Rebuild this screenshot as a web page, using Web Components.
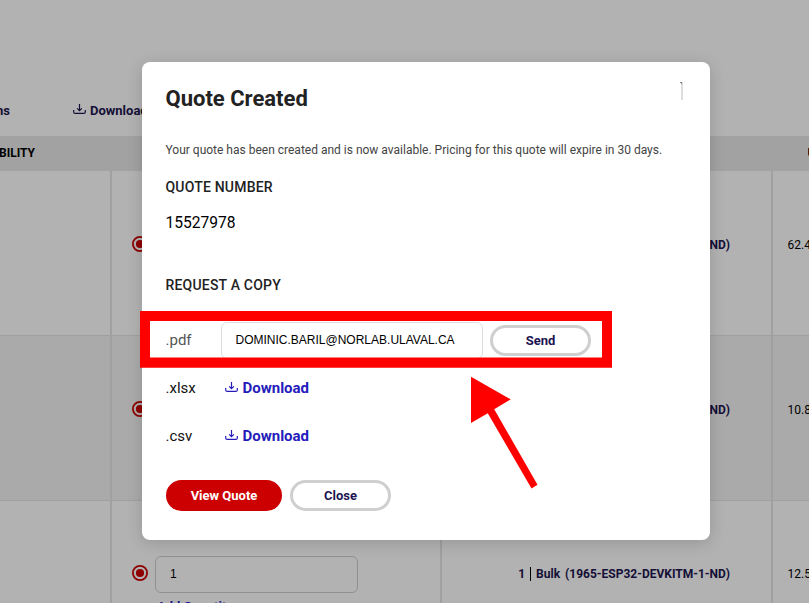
<!DOCTYPE html>
<html lang="en">
<head>
<meta charset="utf-8">
<title>Quote Created</title>
<style>
html,body{margin:0;width:809px;height:603px;overflow:hidden;background:#fff;font-family:Roboto,"Liberation Sans",sans-serif;color:#000}
</style>
</head>
<body>
<quote-page></quote-page>
<script>
const define = (name, html) => customElements.define(name, class extends HTMLElement {
  constructor() {
    super();
    const t = document.createElement('template');
    t.innerHTML = html;
    this.attachShadow({ mode: 'open' }).append(t.content.cloneNode(true));
  }
});

define('download-icon', `
<style>:host{display:block;width:13px;height:11px}svg{display:block}</style>
<svg width="13" height="11" viewBox="0 0 13 11" fill="none" stroke="currentColor" stroke-width="1.2">
<path d="M.7 6v1.9q0 1.5 1.5 1.5h8.6q1.5 0 1.5-1.5V6"/><path d="M6.5 0v6.2M4.1 4.4l2.4 2.3 2.4-2.3"/></svg>`);

define('radio-dot', `
<style>:host{display:block;width:16px;height:16px;flex:none}svg{display:block}</style>
<svg width="16" height="16"><circle cx="8" cy="8" r="7.1" fill="none" stroke="#c00" stroke-width="1.8"/><circle cx="8" cy="8" r="4.1" fill="#c00"/></svg>`);

define('pill-button', `
<style>
:host{display:flex;box-sizing:border-box;width:101px;height:31px;align-items:center;justify-content:center;border:3px solid #cfcfcf;border-radius:16px;background:#fff;color:#1c1450;font-size:13px;font-weight:700;line-height:16px}
:host([primary]){width:116px;border-color:#c00;background:#c00;color:#fff}
:host([low]){padding-top:1px}
</style><slot></slot>`);

define('page-toolbar', `
<style>
:host{display:flex;height:136px;box-sizing:border-box;padding-top:103px;font-size:13px;font-weight:700;line-height:16px;color:#1d164f}
.tail{width:73px;margin-left:-4px;margin-right:4px}
.dl{display:flex;gap:4px}
download-icon{margin-top:1px}
</style>
<span class="tail">ns</span><span class="dl"><download-icon></download-icon><span>Download</span></span>`);

define('table-head', `
<style>
:host{display:flex;justify-content:space-between;align-items:center;height:35px;background:#e9e9e9;font-size:12px;font-weight:700;box-sizing:border-box;padding-bottom:2px}
.l{margin-left:-1px}.r{width:1.5px;overflow:hidden}
</style>
<span class="l">BILITY</span><span class="r">U</span>`);

define('table-row', `
<style>
:host{display:grid;grid-template-columns:112px 330px 331px 1fr;height:165px;box-sizing:border-box;border-bottom:1px solid #e6e6e6;overflow:hidden}
:host([shaded]){background:#f4f4f4}
.c{box-sizing:border-box;border-right:2px solid #e6e6e6;display:flex;padding-top:66px}
:host([editable]) .c{padding-top:65px}
.c:last-child{border:0}
.c.q{padding-left:20px;padding-top:65px}
:host([editable]) .c.q{padding-top:64px}
.p{justify-content:flex-end;padding-right:41px;font-weight:700;font-size:12px;line-height:16px;color:#1d164f;white-space:pre}
.t{padding-left:14.5px;font-size:12px;line-height:16px}
</style>
<div class="c"></div>
<div class="c q"><radio-dot></radio-dot><slot name="qty"></slot></div>
<div class="c p"><slot name="part"></slot></div>
<div class="c t"><slot name="price"></slot></div>`);

define('qty-field', `
<style>
:host{display:block;margin:-9px 0 0 7px;width:203px}
.i{box-sizing:border-box;height:37px;border:1px solid #cfcfcf;border-radius:6px;padding-left:14px;font:12px/35px "Liberation Sans",sans-serif}
.a{margin:6px 0 0 2px;color:#2a1fc4;font-size:13px;font-weight:700;line-height:16px}
</style>
<div class="i"><slot></slot></div><div class="a">Add Quantity</div>`);

define('part-label', `
<style>:host{display:flex;align-items:center;height:16px}
i{width:1px;height:14px;background:#000;margin:0 5px}.n{margin-left:5px}</style>
<span>1</span><i></i><span>Bulk</span><span class="n">(1965-ESP32-DEVKITM-1-ND)</span>`);

define('copy-row', `
<style>
:host{display:flex;align-items:center;height:48px}
.ext{width:55.5px;font-size:15px;color:#111}
:host([muted]) .ext{color:#555}
</style>
<span class="ext"><slot name="ext"></slot></span><slot></slot>`);

define('download-link', `
<style>:host{display:flex;gap:4.5px;margin-left:4px;color:#251bbb;font-size:15px;font-weight:700;line-height:20px}download-icon{margin-top:4px}</style>
<download-icon></download-icon><span><slot></slot></span>`);

define('email-field', `
<style>:host{display:block;box-sizing:border-box;width:262px;height:37px;border:1px solid #ddd;border-radius:6px;padding-left:13.5px;margin-right:7px;font:12px/35px "Liberation Sans",sans-serif}</style><slot></slot>`);

define('close-mark', `
<style>:host{display:block;width:3px;height:20px}svg{display:block}</style>
<svg width="3" height="20"><path d="M2 1V19" stroke="#d5d5d5" stroke-width="1.6"/><path d="M0 1.5H2M1.5 1V3" stroke="#888" stroke-width="1"/></svg>`);

define('quote-dialog', `
<style>
:host{display:block;box-sizing:border-box;width:568px;height:478px;border-radius:8px;background:#fff;padding:23px 24px 0 23.5px;box-shadow:0 3px 16px rgba(0,0,0,.16)}
header{display:flex;justify-content:space-between;height:28px;padding-right:3px}
close-mark{margin-top:-4px}
h1,h2,p{margin:0;white-space:nowrap}
h1{font-size:22px;line-height:28px;color:#222}
.d{margin-top:29px;font-size:12px;line-height:16px;color:#444}
h2{font-size:14px;line-height:18px;font-weight:500;letter-spacing:.2px;color:#222;margin-top:20px}
.n{margin-top:17px;font-size:15.6px;line-height:20px}
.n + h2{margin-top:43px}
.rows{margin-top:22px}
footer{display:flex;gap:8px;margin:20px 0 0 .5px}
</style>
<header><h1>Quote Created</h1><close-mark></close-mark></header>
<p class="d">Your quote has been created and is now available. Pricing for this quote will expire in 30 days.</p>
<h2>QUOTE NUMBER</h2>
<p class="n">15527978</p>
<h2>REQUEST A COPY</h2>
<div class="rows">
<copy-row muted><span slot="ext">.pdf</span><email-field>DOMINIC.BARIL@NORLAB.ULAVAL.CA</email-field><pill-button low>Send</pill-button></copy-row>
<copy-row><span slot="ext">.xlsx</span><download-link>Download</download-link></copy-row>
<copy-row><span slot="ext">.csv</span><download-link>Download</download-link></copy-row>
</div>
<footer><pill-button primary>View Quote</pill-button><pill-button>Close</pill-button></footer>`);

define('callout-marks', `
<style>:host{display:block}svg{display:block}</style>
<svg width="809" height="603" fill="#f00"><path fill-rule="evenodd" d="M140 311H612V367.7H140ZM150 321V357.5H602V321Z"/>
<path d="M471 376.7 510.7 399.3 494.2 409.3 537.5 484.7 531.5 488.4 487.8 413.2 471 423Z"/></svg>`);

define('quote-page', `
<style>
:host{display:block;position:relative;width:809px;height:603px;overflow:hidden}
.shade,callout-marks{position:absolute;inset:0}
.shade{background:rgba(0,0,0,.3);display:flex;align-items:flex-start;padding:62px 0 0 142px}
</style>
<page-toolbar></page-toolbar>
<table-head></table-head>
<table-row><part-label slot="part"></part-label><span slot="price">62.4</span></table-row>
<table-row shaded><part-label slot="part"></part-label><span slot="price">10.8</span></table-row>
<table-row editable><qty-field slot="qty">1</qty-field><part-label slot="part"></part-label><span slot="price">12.5</span></table-row>
<div class="shade"><quote-dialog></quote-dialog></div>
<callout-marks></callout-marks>`);
</script>
</body>
</html>
